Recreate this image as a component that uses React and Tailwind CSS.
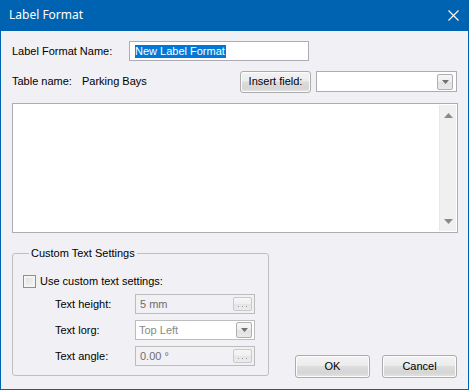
import React from "react";

function DropBtn() {
  return (
    <div className="w-[16px] h-[16px] rounded-[2px] border border-[#b0b0b0] bg-[linear-gradient(#f6f6f6_0%,#eeeeee_50%,#e2e2e2_51%,#e9e9e9_100%)] flex items-center justify-center">
      <svg width="7" height="4" viewBox="0 0 7 4">
        <path d="M0 0H7L3.5 4Z" fill="#707070" />
      </svg>
    </div>
  );
}

function EllipsisBtn() {
  return (
    <div className="w-[19px] h-[14px] rounded-[2px] border border-[#c9c9c9] bg-[linear-gradient(#f6f6f6_0%,#efefef_50%,#e4e4e4_51%,#ececec_100%)] flex items-end justify-center pb-[2px]">
      <svg width="9" height="2" viewBox="0 0 9 2">
        <rect x="0" y="0" width="1" height="1" fill="#9a9a9a" />
        <rect x="4" y="0" width="1" height="1" fill="#9a9a9a" />
        <rect x="8" y="0" width="1" height="1" fill="#9a9a9a" />
      </svg>
    </div>
  );
}

function WinButton({ children, className = "" }) {
  return (
    <div
      className={
        "flex items-center justify-center rounded-[3px] border border-[#acacac] bg-[linear-gradient(#f3f3f3_0%,#ececec_45%,#dddddd_50%,#d5d5d5_80%,#e4e4e4_100%)] shadow-[inset_0_0_0_1px_#fcfcfc] " +
        className
      }
    >
      {children}
    </div>
  );
}

export default function App() {
  return (
    <div className="w-[469px] h-[390px] bg-[#0063b1] flex flex-col font-['Liberation_Sans',Arial,sans-serif] text-[11px] text-black">
      <div className="h-[31px] shrink-0 flex items-center justify-between pl-[9px] pr-[10px] text-white font-['Noto_Sans',sans-serif] text-[12px]">
        <span className="-mt-[1px]">Label Format</span>
        <svg width="11" height="11" viewBox="0 0 11 11" className="-mt-[1px]">
          <path d="M0.5 0.5L10.5 10.5M10.5 0.5L0.5 10.5" stroke="white" strokeWidth="1.1" />
        </svg>
      </div>
      <div className="flex-1 mx-[1px] mb-[1px] bg-[#f0f0f5] flex flex-col pl-[11px] pr-[10px] pt-[10px]">
        {/* Row 1 */}
        <div className="h-[20px] flex items-center">
          <span className="w-[117px]">Label Format Name:</span>
          <div className="w-[180px] h-[20px] border border-[#abadb3] bg-white flex items-center pl-[5px]">
            <span className="bg-[#0078d7] text-white leading-[13px] pr-[1px]">New Label Format</span>
          </div>
        </div>
        {/* Row 2 */}
        <div className="mt-[10px] h-[21px] flex items-center">
          <span className="w-[70px]">Table name:</span>
          <span>Parking Bays</span>
          <div className="flex-1" />
          <WinButton className="w-[71px] h-[22px]">Insert field:</WinButton>
          <div className="ml-[5px] mr-[1px] w-[141px] h-[21px] border border-[#abadb3] bg-white flex items-center justify-end pr-[3px]">
            <DropBtn />
          </div>
        </div>
        {/* Text area */}
        <div className="mt-[11px] h-[130px] border border-[#abadb3] bg-white flex justify-end p-[1px]">
          <div className="w-[17px] bg-[#f0f0f0] border-l border-[#e8e8e8] flex flex-col items-center justify-between pt-[8px] pb-[7px]">
            <svg width="9" height="5" viewBox="0 0 9 5">
              <path d="M4.5 0L9 5H0Z" fill="#8a8a8a" />
            </svg>
            <svg width="9" height="5" viewBox="0 0 9 5">
              <path d="M0 0H9L4.5 5Z" fill="#8a8a8a" />
            </svg>
          </div>
        </div>
        {/* Bottom */}
        <div className="flex items-end justify-between mt-[13px]">
          <fieldset className="w-[257px] border border-[#bfbfbf] rounded-[3px] pl-[10px] pr-[12px] pb-[9px] mb-[1px]">
            <legend className="ml-[6px] px-[2px] leading-[14px]">Custom Text Settings</legend>
            <div className="flex items-center mt-[15px] h-[13px]">
              <div className="w-[13px] h-[13px] border border-[#8e8f8f] bg-[linear-gradient(135deg,#dcdcdc,#f6f6f6)] shadow-[inset_0_0_0_2px_#f4f4f4]" />
              <span className="ml-[4px]">Use custom text settings:</span>
            </div>
            <div className="flex items-center mt-[6px] h-[20px] pl-[32px]">
              <span className="w-[80px]">Text height:</span>
              <div className="w-[120px] h-[20px] border border-[#bcbcbc] bg-[#f0f0f5] flex items-center justify-between pl-[4px] pr-[2px] text-[#6d6d6d]">
                <span>5 mm</span>
                <EllipsisBtn />
              </div>
            </div>
            <div className="flex items-center mt-[6px] h-[20px] pl-[32px]">
              <span className="w-[80px]">Text lorg:</span>
              <div className="w-[120px] h-[20px] border border-[#bcbcbc] bg-white flex items-center justify-between pl-[3px] pr-[2px] text-[#8a8a8a]">
                <span>Top Left</span>
                <DropBtn />
              </div>
            </div>
            <div className="flex items-center mt-[6px] h-[20px] pl-[32px]">
              <span className="w-[80px]">Text angle:</span>
              <div className="w-[120px] h-[20px] border border-[#bcbcbc] bg-[#f0f0f5] flex items-center justify-between pl-[4px] pr-[2px] text-[#6d6d6d]">
                <span>0.00 °</span>
                <EllipsisBtn />
              </div>
            </div>
          </fieldset>
          <div className="flex gap-[12px] mr-[1px] mb-[-1px]">
            <WinButton className="w-[75px] h-[23px]">OK</WinButton>
            <WinButton className="w-[75px] h-[23px]">Cancel</WinButton>
          </div>
        </div>
      </div>
    </div>
  );
}
